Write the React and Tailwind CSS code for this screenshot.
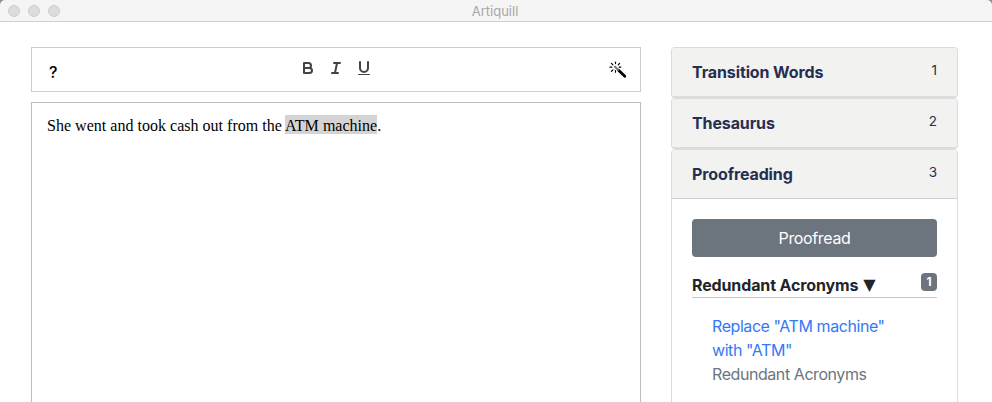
import React from "react";

const headers = [
  { title: "Transition Words", count: 1 },
  { title: "Thesaurus", count: 2 },
  { title: "Proofreading", count: 3 },
];

function FormatButton({ label, children }) {
  return (
    <button aria-label={label} className="flex h-6 w-7 items-center justify-center">
      <svg viewBox="0 0 18 18" className="h-[18px] w-[18px]" fill="none" stroke="#444" strokeWidth="2" strokeLinecap="round" strokeLinejoin="round">
        {children}
      </svg>
    </button>
  );
}

function Wand() {
  return (
    <svg viewBox="0 0 18 18" className="h-[18px] w-[18px]" fill="none" stroke="#000" strokeLinecap="round">
      <path d="M9.6 9.2 15.8 15.2" strokeWidth="2.8" />
      <path d="m6 5.7 3 3" strokeWidth="2" stroke="#777" />
      <path d="M6.5 1v1.6M2.4 2.4l1.5 1.5M1 6.2h1.8M2.4 10.4l1.5-1.6M6.5 9.6v1.6M10.6 2.4 9.2 3.8M10.2 6.2h1.6" strokeWidth="1.2" />
    </svg>
  );
}

function Header({ title, count }) {
  return (
    <div className="flex h-full justify-between bg-[#f2f2f1] px-5 text-[#252f50]">
      <h2 className="pt-3 text-[16px] leading-6 font-bold tracking-[-0.12px]">{title}</h2>
      <span className="pt-3 text-[13.5px] leading-5">{count}</span>
    </div>
  );
}

export default function App() {
  return (
    <div className="h-[402px] w-[992px] overflow-hidden bg-white font-['Inter',sans-serif]">
      <div className="h-[22px] bg-[#8c8c8c]">
        <header className="grid h-[22px] grid-cols-[1fr_auto_1fr] items-center rounded-t-[5px] border-b border-[#cfcfcf] bg-[#f5f5f5]">
          <div className="flex gap-2 pl-2">
            <span className="h-3 w-3 rounded-full border border-[#cecece] bg-[#dcdcdc]" />
            <span className="h-3 w-3 rounded-full border border-[#cecece] bg-[#dcdcdc]" />
            <span className="h-3 w-3 rounded-full border border-[#cecece] bg-[#dcdcdc]" />
          </div>
          <span className="pt-px pr-0.5 text-[13px] leading-5 text-[#a7a7a7]">Artiquill</span>
        </header>
      </div>

      <div className="flex gap-[30px] pt-[25px] pl-[31px]">
        <main className="w-[610px]">
          <div className="flex h-[45px] justify-between border border-[#ccc] pr-[13px] pl-[17px]">
            <button className="w-7 self-start pt-3 text-left font-['Inter',sans-serif] text-[16px] leading-6 font-medium text-black">?</button>
            <div className="flex pt-2 pr-1">
              <FormatButton label="Bold">
                <path d="M5 4h4.5a2.5 2.5 0 0 1 0 5H5V4Z" />
                <path d="M5 9h5.5a2.5 2.5 0 0 1 0 5H5V9Z" />
              </FormatButton>
              <FormatButton label="Italic">
                <path d="M7 4h6M5 14h6M8 14l2-10" />
              </FormatButton>
              <FormatButton label="Underline">
                <path d="M5 3v6a4 4 0 0 0 8 0V3" />
                <rect x="3" y="15" width="12" height="1" rx="0.5" fill="#444" stroke="none" />
              </FormatButton>
            </div>
            <button aria-label="Magic wand" className="flex w-7 justify-end self-start pt-[13px]">
              <Wand />
            </button>
          </div>
          <div className="mt-[10px] h-[310px] border border-[#bfbfbf] px-[15px] pt-[11px] font-['Liberation_Serif',serif] text-[16px] leading-6 tracking-[0.02px] text-black">
            <p>
              She went and took cash out from the <span className="bg-[#d4d4d4] pt-0.5">ATM machine</span>.
            </p>
          </div>
        </main>

        <aside className="w-[287px]">
          {headers.slice(0, 2).map((item) => (
            <section key={item.title} className="h-[51px] overflow-hidden rounded-[4px] border border-b-2 border-[#dcdcdc]">
              <Header {...item} />
            </section>
          ))}
          <section className="h-[260px] overflow-hidden rounded-t-[4px] border border-[#dcdcdc]">
            <div className="h-[49px] border-b border-[#d0d0d0] bg-[#f2f2f1]">
              <Header {...headers[2]} />
            </div>
            <div className="px-5 pt-5">
              <button className="block h-[38px] w-full rounded-[4px] bg-[#6c757d] text-[16px] leading-6 tracking-[-0.35px] text-white">Proofread</button>
              <div className="mt-4 flex h-[25px] justify-between border-b border-[#c6c8ca] text-[#212529]">
                <h3 className="flex items-start text-[16px] leading-6 font-bold tracking-[-0.13px]">
                  Redundant Acronyms
                  <span className="ml-[5px] font-['DejaVu_Sans',sans-serif] text-[16px] leading-6 font-normal tracking-normal">▼</span>
                </h3>
                <span className="h-[18px] w-4 rounded-[4px] bg-[#6c757d] text-center text-[12px] leading-[18px] font-bold text-white">1</span>
              </div>
              <div className="pt-4 pl-5 text-[16px] leading-6 tracking-[-0.43px]">
                <a className="block text-[#3478f6]">Replace "ATM machine"<br />with "ATM"</a>
                <p className="text-[#6c757d]">Redundant Acronyms</p>
              </div>
            </div>
          </section>
        </aside>
      </div>
    </div>
  );
}
